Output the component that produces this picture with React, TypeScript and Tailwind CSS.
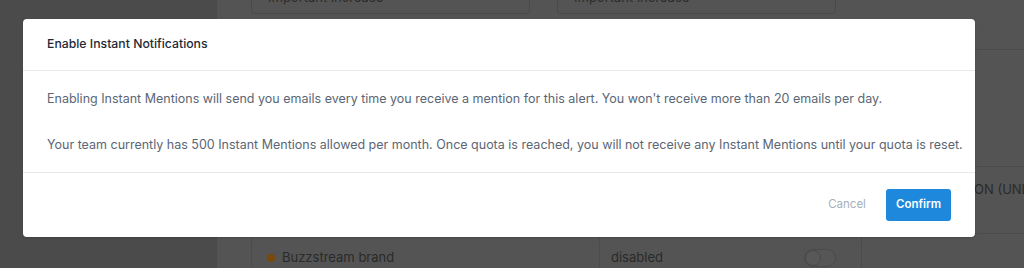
export default function App() {
  return (
    <div className="relative h-[268px] w-[1024px] overflow-hidden bg-[#545454] font-['Inter',sans-serif]">
      {/* dimmed page underneath */}
      <div className="flex h-full">
        <div className="w-[217px] shrink-0 border-r border-[#4a4a4a] bg-[#4b4b4c]" />
        <div className="flex flex-1 flex-col">
          <div className="flex h-[50px] border-b border-[#4c4c4c]">
            <div className="flex gap-[27px] pl-[34px]">
              <div className="-mt-[26px] h-[40px] w-[279px] rounded border border-[#4a4a4a] px-4 pt-[14px] text-[13px] leading-4 text-[#2c2c2c]">
                Important increase
              </div>
              <div className="-mt-[26px] h-[40px] w-[279px] rounded border border-[#4a4a4a] px-4 pt-[14px] text-[13px] leading-4 text-[#2c2c2c]">
                Important increase
              </div>
            </div>
          </div>
          <div className="flex flex-1 flex-col">
            <div className="h-[117px] border-b border-[#4c4c4c]" />
            <div className="h-[67px] border-b border-[#4c4c4c] pl-[757px] pt-[14px] text-[13px] leading-4 text-[#2a2a2a] whitespace-nowrap">
              ON (UNLIMITED)
            </div>
            <div className="flex flex-1 pl-[34px]">
              <div className="flex w-[349px] items-center gap-[7px] border-l border-r border-[#4c4c4c] pl-[15px] pt-[14px] text-[13px] text-[#2a2a2a]">
                <span className="h-[8px] w-[8px] rounded-full bg-[#7a4808]" />
                Buzzstream brand
              </div>
              <div className="flex w-[262px] items-center justify-between border-r border-[#4c4c4c] pl-[11px] pr-[25px] pt-[14px] text-[13px] text-[#2a2a2a]">
                disabled
                <span className="h-[18px] w-[32px] rounded-full border border-[#4a4a4a] bg-[#565656]">
                  <span className="block h-[16px] w-[16px] rounded-full border border-[#4a4a4a] bg-[#585858]" />
                </span>
              </div>
            </div>
          </div>
        </div>
      </div>

      {/* modal */}
      <div className="absolute left-[23px] top-[19px] w-[952px] rounded-[4px] bg-white shadow-sm">
        <div className="flex h-[52px] items-center border-b border-[#e6e9ee] px-6 text-[12.25px] font-medium text-[#1f2a37]">
          Enable Instant Notifications
        </div>
        <div className="flex flex-col gap-[26px] px-6 pb-[17px] pt-[18px] text-[12.5px] leading-5 text-[#5b6675] whitespace-nowrap">
          <p>Enabling Instant Mentions will send you emails every time you receive a mention for this alert. You won't receive more than 20 emails per day.</p>
          <p>Your team currently has 500 Instant Mentions allowed per month. Once quota is reached, you will not receive any Instant Mentions until your quota is reset.</p>
        </div>
        <div className="flex h-[65px] items-center justify-end gap-[20px] border-t border-[#e6e9ee] px-6">
          <button className="text-[11.5px] text-[#a7afba]">Cancel</button>
          <button className="h-[32px] rounded-[3px] bg-[#1e88dc] px-[10px] text-[11.5px] font-semibold text-white">Confirm</button>
        </div>
      </div>
    </div>
  );
}
